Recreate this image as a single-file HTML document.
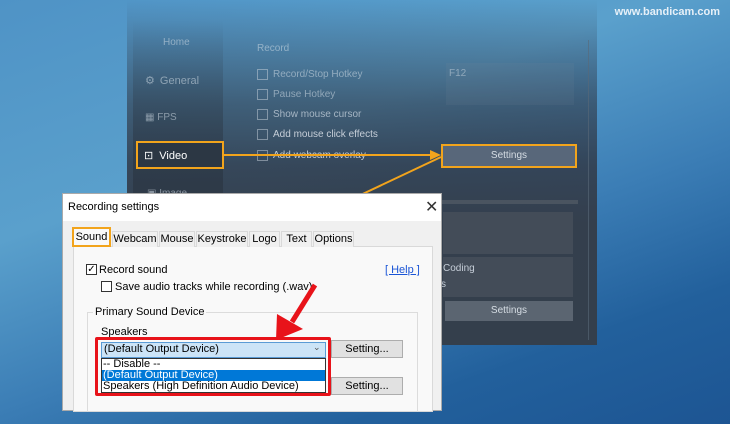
<!DOCTYPE html>
<html><head><meta charset="utf-8"><style>
*{margin:0;padding:0;box-sizing:border-box}
body{width:730px;height:424px;overflow:hidden;position:relative;font-family:"Liberation Sans",sans-serif;background:linear-gradient(160deg,#4f93c6 0%,#5aa0cc 35%,#3b7db5 60%,#22609c 80%,#1d5593 100%)}
.a{position:absolute}
.win{left:127px;top:0;width:470px;height:345px;background:linear-gradient(180deg,rgba(60,80,100,0) 0%,rgba(55,72,92,.3) 12%,rgba(50,62,78,.65) 30%,rgba(50,62,78,.9) 48%,#343f4d 65%,#343f4c 100%)}
.side{left:133px;top:20px;width:90px;height:325px;background:linear-gradient(180deg,rgba(40,50,62,0),rgba(40,50,62,.5) 40%,#2c3541)}
.t{color:#c6ced8;font-size:11px;white-space:nowrap}
.f{color:rgba(210,220,230,.55);font-size:10px;white-space:nowrap}
.cb{width:11px;height:11px;border:1px solid rgba(200,210,220,.5)}
.dlg{left:62px;top:193px;width:380px;height:218px;background:#f0f0f0;border:1px solid #aaa}
.tab{position:absolute;top:37px;height:16px;font-size:11px;color:#000;background:#f0f0f0;border:1px solid #d9d9d9;border-bottom:none;text-align:center;line-height:15px}
.btn{position:absolute;background:#e1e1e1;border:1px solid #adadad;font-size:11px;text-align:center;line-height:16px;color:#000}
.c{font-size:11px;color:#000;white-space:nowrap;position:absolute}
.wcb{position:absolute;width:11px;height:11px;border:1px solid #333;background:#fff}
</style></head><body>
<div class="a t" style="right:10px;top:6px;color:#e6f0f8;font-weight:bold;font-size:11px">www.bandicam.com</div>
<div class="a win"></div>
<div class="a side"></div>
<div class="a" style="left:588px;top:40px;width:1px;height:300px;background:rgba(90,105,120,.6)"></div>
<div class="a f" style="left:163px;top:37px">Home</div>
<div class="a f" style="left:145px;top:74px;font-size:11px">⚙ <span style="margin-left:2px">General</span></div>
<div class="a f" style="left:145px;top:112px">▦ FPS</div>
<div class="a f" style="left:147px;top:188px">▣ Image</div>
<div class="a f" style="left:257px;top:43px">Record</div>
<div class="a cb" style="left:257px;top:69px"></div><div class="a f" style="left:273px;top:69px">Record/Stop Hotkey</div>
<div class="a cb" style="left:257px;top:89px"></div><div class="a f" style="left:273px;top:89px">Pause Hotkey</div>
<div class="a cb" style="left:257px;top:109px"></div><div class="a f" style="left:273px;top:109px;color:rgba(210,220,230,.7)">Show mouse cursor</div>
<div class="a cb" style="left:257px;top:129px"></div><div class="a t" style="left:273px;top:129px;font-size:10px">Add mouse click effects</div>
<div class="a cb" style="left:257px;top:150px"></div><div class="a t" style="left:273px;top:150px;font-size:10px;text-decoration:line-through">Add webcam overlay</div>
<div class="a f" style="left:449px;top:68px;font-size:10px">F12</div>
<div class="a" style="left:446px;top:63px;width:128px;height:42px;background:rgba(120,140,160,.12)"></div>
<div class="a" style="left:440px;top:200px;width:138px;height:4px;background:#4a5460"></div>
<div class="a" style="left:443px;top:212px;width:130px;height:42px;background:#434c58"></div>
<div class="a" style="left:443px;top:257px;width:130px;height:40px;background:#434c58"></div>
<div class="a t" style="left:443px;top:263px;font-size:10px">Coding</div>
<div class="a t" style="left:441px;top:279px;font-size:10px">s</div>
<div class="a" style="left:445px;top:301px;width:128px;height:20px;background:#5b6571;color:#d6dde4;font-size:10px;text-align:center;line-height:19px">Settings</div>
<div class="a" style="left:441px;top:144px;width:136px;height:24px;border:2px solid #f2a41c;background:#58677a;color:#d6dde4;font-size:10px;text-align:center;line-height:20px">Settings</div>
<div class="a" style="left:136px;top:141px;width:88px;height:28px;border:2px solid #f2a41c;background:#2c3744"></div>
<div class="a t" style="left:144px;top:149px;color:#fff">⊡ <span style="margin-left:3px">Video</span></div>
<svg class="a" style="left:0;top:0" width="730" height="424">
<line x1="224" y1="155" x2="432" y2="155" stroke="#f2a41c" stroke-width="2"/>
<polygon points="441,155 430,150 430,160" fill="#f2a41c"/>
<line x1="441" y1="157" x2="352" y2="199" stroke="#f2a41c" stroke-width="2"/>
<polygon points="341,204 349,193 354,203" fill="#f2a41c"/>
</svg>
<div class="a dlg">
<div class="a" style="left:0;top:0;width:378px;height:27px;background:#fff"></div>
<div class="c" style="left:5px;top:7px">Recording settings</div>
<div class="c" style="left:362px;top:3px;font-size:16px;color:#333">✕</div>
<div class="a" style="left:10px;top:52px;width:360px;height:166px;background:#f9f9f9;border:1px solid #d9d9d9"></div>
<div class="tab" style="left:9px;top:33px;width:39px;height:20px;background:#f9f9f9;border:2px solid #f2a41c;line-height:16px">Sound</div>
<div class="tab" style="left:49px;width:46px">Webcam</div>
<div class="tab" style="left:96px;width:36px">Mouse</div>
<div class="tab" style="left:133px;width:52px">Keystroke</div>
<div class="tab" style="left:186px;width:31px">Logo</div>
<div class="tab" style="left:218px;width:31px">Text</div>
<div class="tab" style="left:250px;width:41px">Options</div>
<div class="wcb" style="left:23px;top:70px;font-size:10px;line-height:9px;text-align:center">✓</div>
<div class="c" style="left:36px;top:70px">Record sound</div>
<div class="wcb" style="left:38px;top:87px"></div>
<div class="c" style="left:52px;top:87px">Save audio tracks while recording (.wav)</div>
<div class="c" style="left:322px;top:70px;color:#1a55d6;text-decoration:underline">[ Help ]</div>
<div class="a" style="left:24px;top:118px;width:331px;height:100px;border:1px solid #dcdcdc;border-bottom:none"></div>
<div class="c" style="left:30px;top:112px;background:#f9f9f9;padding:0 2px">Primary Sound Device</div>
<div class="c" style="left:38px;top:132px">Speakers</div>
<div class="btn" style="left:268px;top:146px;width:72px;height:18px">Setting...</div>
<div class="btn" style="left:268px;top:183px;width:72px;height:18px">Setting...</div>
<div class="a" style="left:38px;top:148px;width:225px;height:16px;background:#cce4f7;border:1px solid #5a9bd5"></div>
<div class="c" style="left:41px;top:149px">(Default Output Device)</div>
<div class="c" style="left:250px;top:148px;font-size:9px;color:#555">⌄</div>
<div class="a" style="left:38px;top:164px;width:225px;height:35px;background:#fff;border:1px solid #333"></div>
<div class="c" style="left:40px;top:164px">-- Disable --</div>
<div class="a" style="left:39px;top:176px;width:223px;height:11px;background:#0078d7"></div>
<div class="c" style="left:40px;top:175px;color:#fff">(Default Output Device)</div>
<div class="c" style="left:40px;top:186px">Speakers (High Definition Audio Device)</div>
<div class="a" style="left:32px;top:143px;width:236px;height:59px;border:3px solid #e8131a;border-radius:2px"></div>
</div>
<svg class="a" style="left:0;top:0" width="730" height="424">
<line x1="315" y1="285" x2="292" y2="322" stroke="#e8131a" stroke-width="5"/>
<polygon points="276,340 277,314 303,329" fill="#e8131a"/>
</svg>
</body></html>
